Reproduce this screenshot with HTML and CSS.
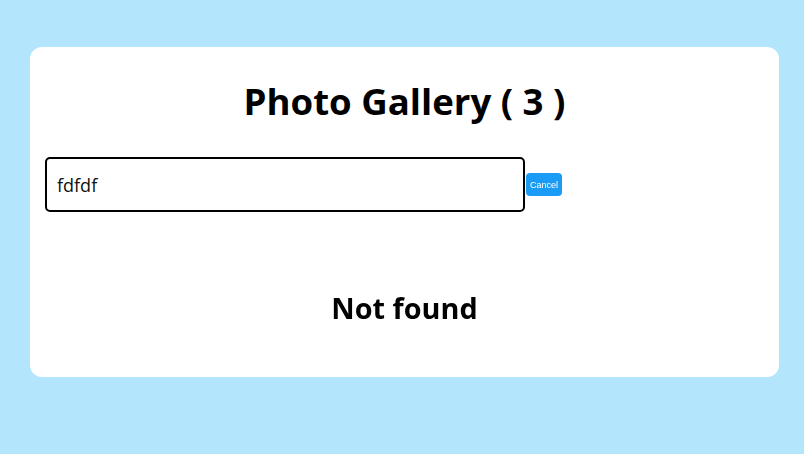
FILE: index.html
```html
<!DOCTYPE html>
<html>
<head>
<meta charset="utf-8">
<link rel="stylesheet" href="styles.css">
</head>
<body>
<div class="card">
  <h1 class="title">Photo Gallery ( 3 )</h1>
  <div class="search">
    <input class="search-input" type="text" value="fdfdf" autofocus>
    <button class="cancel">Cancel</button>
  </div>
  <h2 class="empty">Not found</h2>
</div>
</body>
</html>
```
FILE: styles.css
```css
html, body {
  margin: 0;
  padding: 0;
}
body {
  background: #b3e5fc;
  font-family: "Open Sans", "Noto Sans", sans-serif;
  width: 804px;
  height: 454px;
  overflow: hidden;
}
.card {
  margin: 47px 0 0 30px;
  width: 749px;
  height: 330px;
  box-sizing: border-box;
  background: #fff;
  border-radius: 12px;
  padding: 0 15px;
  display: flex;
  flex-direction: column;
}
.title {
  margin: 30px 0 0;
  text-align: center;
  font-size: 36.6px;
  font-weight: 700;
  line-height: 48px;
  color: #000;
}
.search {
  display: flex;
  align-items: center;
  margin-top: 32px;
}
.search-input {
  width: 480px;
  height: 55px;
  box-sizing: border-box;
  border: 2px solid #000;
  border-radius: 5px;
  padding: 0 10px;
  font-family: "Open Sans", sans-serif;
  font-size: 18px;
  color: #111;
  outline: none;
  caret-color: #000;
}
.cancel {
  margin-left: 1px;
  width: 36px;
  height: 23px;
  padding: 0;
  border: none;
  border-radius: 4px;
  background: #1a9bf5;
  color: #fff;
  font-family: "Liberation Sans", Arial, sans-serif;
  font-size: 9px;
}
.empty {
  margin: 78px 0 0;
  text-align: center;
  font-size: 28.8px;
  font-weight: 700;
  line-height: 36px;
  color: #000;
}
```
